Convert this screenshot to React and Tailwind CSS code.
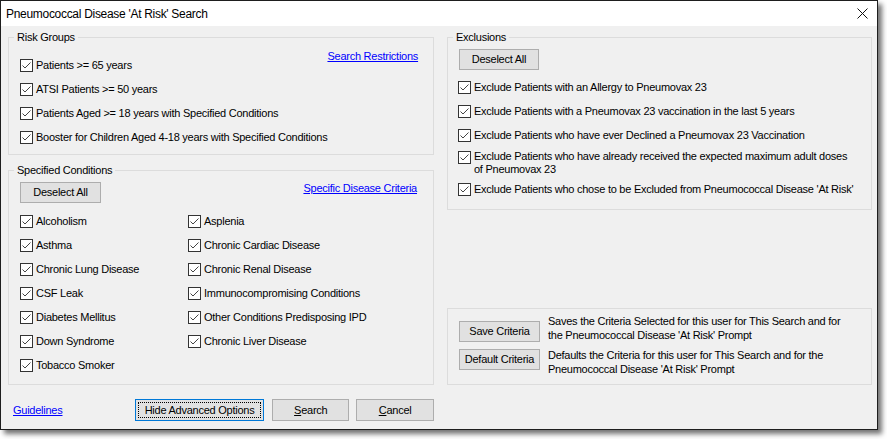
import React from 'react';

const font = { fontFamily: '"Liberation Sans", Arial, sans-serif' };

const riskGroups = [
  'Patients >= 65 years',
  'ATSI Patients >= 50 years',
  'Patients Aged >= 18 years with Specified Conditions',
  'Booster for Children Aged 4-18 years with Specified Conditions',
];

const conditionsLeft = [
  'Alcoholism',
  'Asthma',
  'Chronic Lung Disease',
  'CSF Leak',
  'Diabetes Mellitus',
  'Down Syndrome',
  'Tobacco Smoker',
];

const conditionsRight = [
  'Asplenia',
  'Chronic Cardiac Disease',
  'Chronic Renal Disease',
  'Immunocompromising Conditions',
  'Other Conditions Predisposing IPD',
  'Chronic Liver Disease',
];

// Win32-style ticked box
const Tick = () => (
  <svg width="13" height="13" viewBox="0 0 13 13" className="shrink-0">
    <rect x="0.5" y="0.5" width="12" height="12" fill="#fff" stroke="#333" />
    <polyline points="2.5,6.5 5,9 10.5,3.5" fill="none" stroke="#444" strokeWidth="1" />
  </svg>
);

const CheckRow = ({ label }) => (
  <div className="flex h-[24px] items-center gap-[3px]">
    <Tick />
    <span className="whitespace-nowrap leading-[13px]">{label}</span>
  </div>
);

const Button = ({ children, className = '' }) => (
  <button
    className={`flex h-[21px] items-center justify-center border border-[#adadad] bg-[#e1e1e1] leading-[13px] ${className}`}
  >
    {children}
  </button>
);

const Group = ({ title, className = '', children }) => (
  <fieldset className={`border border-[#dcdcdc] ${className}`}>
    <legend className="ml-[5px] px-[3px] leading-[13px]">{title}</legend>
    {children}
  </fieldset>
);

const Link = ({ children, className = '' }) => (
  <a href="#" className={`shrink-0 whitespace-nowrap leading-[13px] text-[#0000ff] underline ${className}`}>
    {children}
  </a>
);

export default function App() {
  return (
    <div
      className="h-[439px] w-[887px] overflow-hidden bg-white text-[11px] tracking-[-0.25px] text-black"
      style={font}
    >
      <div className="flex h-[430px] w-[878px] flex-col border border-[#1e1e1e] bg-[#f0f0f0] shadow-[4px_4px_5px_rgba(0,0,0,0.55)]">
        {/* title bar */}
        <div className="flex h-[25px] shrink-0 items-center justify-between bg-white pl-[5px] pr-[9px]">
          <span className="text-[12px] leading-[14px] tracking-[-0.3px]">Pneumococcal Disease 'At Risk' Search</span>
          <svg width="11" height="11" viewBox="0 0 11 11">
            <path d="M0.5 0.5 L10.5 10.5 M10.5 0.5 L0.5 10.5" stroke="#111" strokeWidth="1" />
          </svg>
        </div>

        <div className="flex flex-1 gap-[13px] pl-[7px] pt-[5px]">
          {/* left column */}
          <div className="flex w-[426px] flex-col">
            <Group title="Risk Groups" className="h-[124px]">
              <div className="flex items-start pl-[11px] pr-[15px] pt-[9px]">
                <div className="flex min-w-0 flex-1 flex-col">
                  {riskGroups.map((r) => (
                    <CheckRow key={r} label={r} />
                  ))}
                </div>
                <Link className="mt-[-3px]">Search Restrictions</Link>
              </div>
            </Group>

            <Group title="Specified Conditions" className="mt-[9px] h-[221px]">
              <div className="flex items-start justify-between pl-[11px] pr-[16px] pt-[5px]">
                <Button className="w-[81px]">Deselect All</Button>
                <Link>Specific Disease Criteria</Link>
              </div>
              <div className="mt-[6px] flex pl-[11px]">
                <div className="flex w-[168px] flex-col">
                  {conditionsLeft.map((c) => (
                    <CheckRow key={c} label={c} />
                  ))}
                </div>
                <div className="flex flex-col">
                  {conditionsRight.map((c) => (
                    <CheckRow key={c} label={c} />
                  ))}
                </div>
              </div>
            </Group>

            <div className="mt-[14px] flex items-center">
              <div className="w-[127px] pl-[5px]">
                <Link>Guidelines</Link>
              </div>
              <button className="flex h-[22px] w-[130px] items-center justify-center border border-[#0078d7] bg-[#e1e1e1] p-[2px]">
                <span className="flex h-full w-full items-center justify-center border border-dotted border-black leading-[13px]">
                  Hide Advanced Options
                </span>
              </button>
              <Button className="ml-[8px] h-[22px] w-[77px]">
                <span className="underline">S</span>earch
              </Button>
              <Button className="ml-[7px] h-[22px] w-[78px]">
                <span className="underline">C</span>ancel
              </Button>
            </div>
          </div>

          {/* right column */}
          <div className="flex w-[425px] flex-col">
            <Group title="Exclusions" className="h-[179px]">
              <div className="flex flex-col pl-[10px] pt-[5px]">
                <Button className="ml-[1px] w-[80px]">Deselect All</Button>
                <div className="mt-[5px] flex flex-col">
                  <CheckRow label="Exclude Patients with an Allergy to Pneumovax 23" />
                  <CheckRow label="Exclude Patients with a Pneumovax 23 vaccination in the last 5 years" />
                  <CheckRow label="Exclude Patients who have ever Declined a Pneumovax 23 Vaccination" />
                  <div className="flex h-[30px] items-start gap-[3px] pt-[4px]">
                    <Tick />
                    <span className="mt-[-1px] leading-[13px]">
                      Exclude Patients who have already received the expected maximum adult doses
                      <br />
                      of Pneumovax 23
                    </span>
                  </div>
                  <CheckRow label="Exclude Patients who chose to be Excluded from Pneumococcal Disease 'At Risk'" />
                </div>
              </div>
            </Group>
            <div className="h-[98px]" />
            <div className="flex h-[77px] flex-col border border-[#dcdcdc] pl-[11px] pt-[6px]">
              <div className="flex items-start gap-[8px]">
                <Button className="mt-[6px] w-[81px]">Save Criteria</Button>
                <p className="leading-[13.5px]">
                  Saves the Criteria Selected for this user for This Search and for
                  <br />
                  the Pneumococcal Disease 'At Risk' Prompt
                </p>
              </div>
              <div className="mt-[7px] flex items-start gap-[8px]">
                <Button className="w-[81px]">Default Criteria</Button>
                <p className="leading-[13.5px]">
                  Defaults the Criteria for this user for This Search and for the
                  <br />
                  Pneumococcal Disease 'At Risk' Prompt
                </p>
              </div>
            </div>
          </div>
        </div>
      </div>
    </div>
  );
}
